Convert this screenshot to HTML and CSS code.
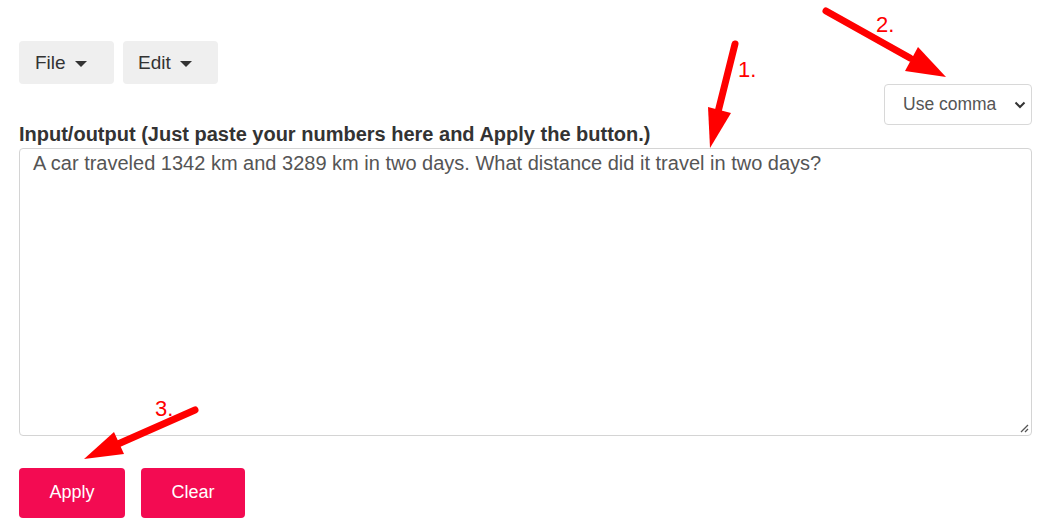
FILE: index.html
```html
<!DOCTYPE html>
<html>
<head>
<meta charset="utf-8">
<link rel="stylesheet" href="styles.css">
</head>
<body>
<div class="page">
  <div class="toolbar">
    <button class="menu-btn">File <span class="caret"></span></button>
    <button class="menu-btn">Edit <span class="caret"></span></button>
  </div>
  <div class="select-row">
    <div class="select">Use comma
      <svg class="chev" width="12" height="8" viewBox="0 0 12 8"><path d="M1.5 1.5 L6 6 L10.5 1.5" fill="none" stroke="#333" stroke-width="2"/></svg>
    </div>
  </div>
  <label class="field-label">Input/output (Just paste your numbers here and Apply the button.)</label>
  <div class="textarea">A car traveled 1342 km and 3289 km in two days. What distance did it travel in two days?
    <svg class="grip" width="10" height="10" viewBox="0 0 10 10"><path d="M9 2 L2 9 M9 6 L6 9" stroke="#555" stroke-width="1.3"/></svg>
  </div>
  <div class="actions">
    <button class="action-btn apply">Apply</button>
    <button class="action-btn clear">Clear</button>
  </div>
  <svg class="annot" width="1050" height="526" viewBox="0 0 1050 526">
    <g fill="red" stroke="red">
      <line x1="735" y1="44" x2="718" y2="112" stroke-width="7" stroke-linecap="round"/>
      <polygon points="708,107 731,113 710,148" stroke="none"/>
      <line x1="826" y1="11" x2="910" y2="58" stroke-width="7" stroke-linecap="round"/>
      <polygon points="905,71 918,47 946,77" stroke="none"/>
      <line x1="195" y1="410" x2="118" y2="444" stroke-width="7" stroke-linecap="round"/>
      <polygon points="114,432 124,454 84,459" stroke="none"/>
    </g>
    <g fill="red" font-family="'Liberation Sans', Arial, sans-serif" font-size="22">
      <text x="738" y="77">1.</text>
      <text x="876" y="32">2.</text>
      <text x="155" y="416">3.</text>
    </g>
  </svg>
</div>
</body>
</html>
```
FILE: styles.css
```css
html, body { margin: 0; padding: 0; background: #fff; }
body { font-family: "Liberation Sans", Arial, sans-serif; }
.page { position: relative; width: 1050px; height: 526px; padding: 41px 18px 0 19px; box-sizing: border-box; }
.toolbar { display: flex; gap: 9px; }
.menu-btn {
  width: 95px; height: 43px; background: #efefef; border: none; border-radius: 4px;
  font-family: inherit; font-size: 19px; color: #333; padding: 0 0 0 16px;
  display: flex; align-items: center; justify-content: flex-start; gap: 9px; margin: 0;
}
.menu-btn + .menu-btn { padding-left: 15px; }
.caret { width: 0; height: 0; border-left: 6px solid transparent; border-right: 6px solid transparent; border-top: 6px solid #333; margin-top: 2px; }
.select-row { display: flex; justify-content: flex-end; margin-top: 0; }
.select {
  width: 148px; height: 41px; box-sizing: border-box; border: 1px solid #d8d8d8; border-radius: 4px;
  display: flex; align-items: center; font-size: 17.5px; color: #555; padding-left: 18px; position: relative;
}
.chev { position: absolute; right: 5px; top: 16px; }
.field-label { display: block; font-weight: bold; font-size: 20px; color: #333; line-height: 23px; height: 24px; margin-top: -2px; }
.textarea {
  position: relative; height: 288px; box-sizing: border-box; border: 1px solid #d4d4d4; border-radius: 4px;
  font-size: 20px; color: #555; padding: 1px 13px; line-height: 27px; margin-top: 1px;
}
.grip { position: absolute; right: 2px; bottom: 2px; }
.actions { display: flex; gap: 16px; margin-top: 32px; }
.action-btn {
  height: 50px; border: none; border-radius: 4px; background: #f30b52; color: #fff;
  font-family: inherit; font-size: 18px; margin: 0; padding: 0 0 1px;
}
.apply { width: 106px; }
.clear { width: 104px; }
.annot { position: absolute; left: 0; top: 0; pointer-events: none; }
```
